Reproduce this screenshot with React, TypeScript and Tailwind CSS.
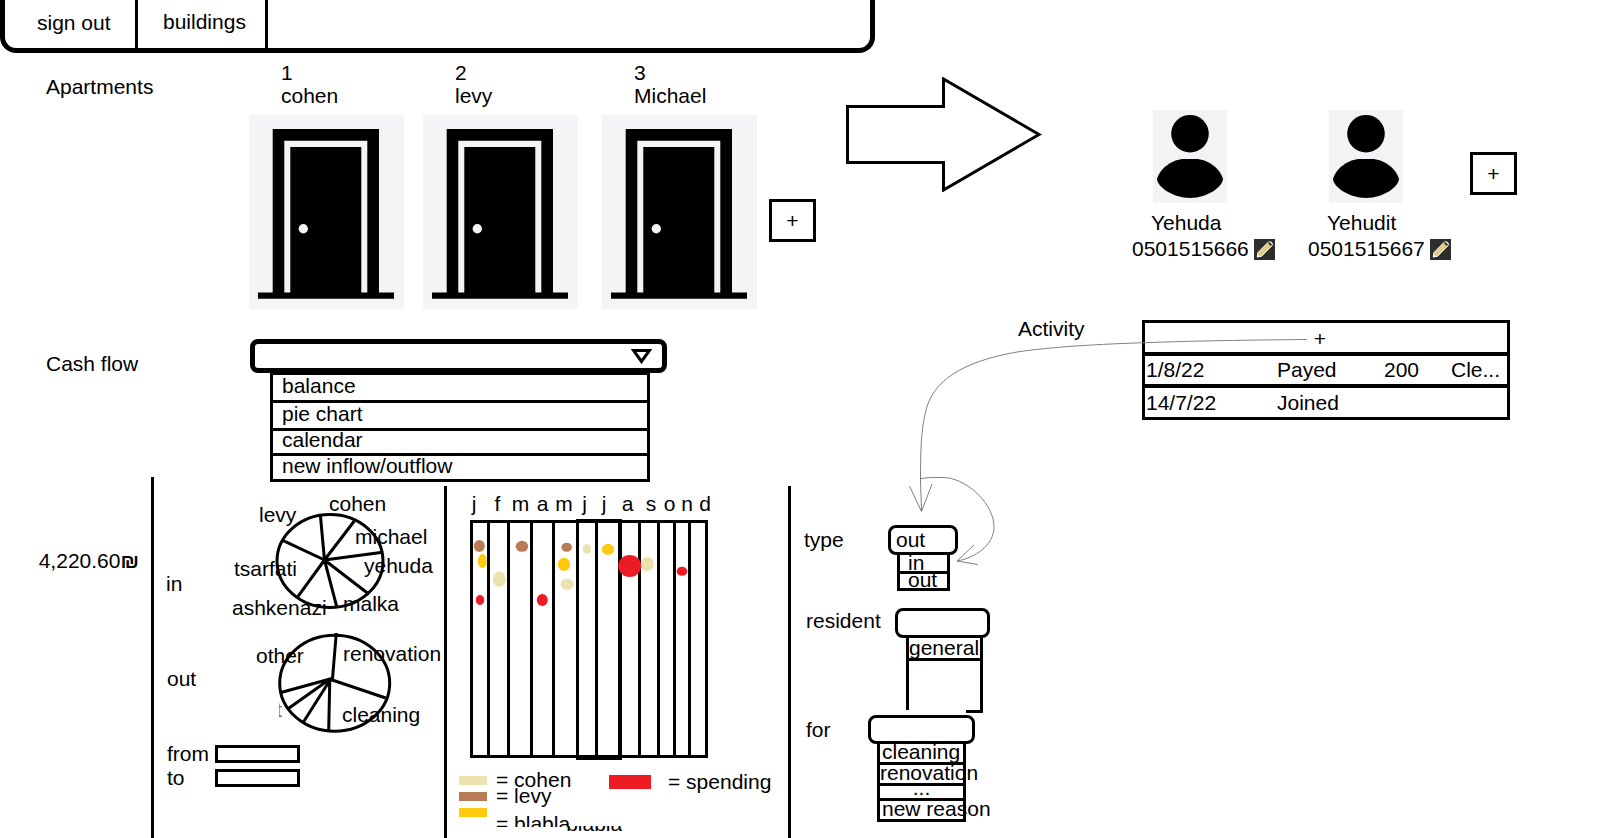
import React from "react";

const doors = [
  { number: "1", name: "cohen" },
  { number: "2", name: "levy" },
  { number: "3", name: "Michael" },
];

const residents = [
  { name: "Yehuda", phone: "0501515666" },
  { name: "Yehudit", phone: "0501515667" },
];

const activity = [
  ["1/8/22", "Payed", "200", "Cle..."],
  ["14/7/22", "Joined", "", ""],
];

const months = ["j", "f", "m", "a", "m", "j", "j", "a", "s", "o", "n", "d"];

const CREAM = "#ece2b0";
const BROWN = "#b97a57";
const GOLD = "#ffc90e";
const RED = "#ed1c24";

const dots = [
  { x: 9.3, y: 27, rx: 5.5, ry: 6, color: BROWN },
  { x: 52, y: 27.3, rx: 6.3, ry: 5.5, color: BROWN },
  { x: 96.7, y: 28.3, rx: 5.3, ry: 4.5, color: BROWN },
  { x: 12.3, y: 42, rx: 4.5, ry: 7, color: GOLD },
  { x: 94, y: 45.3, rx: 6.2, ry: 6.5, color: GOLD },
  { x: 138, y: 30.3, rx: 6.2, ry: 5.5, color: GOLD },
  { x: 29.3, y: 60.3, rx: 6.5, ry: 7.7, color: CREAM },
  { x: 97.3, y: 65.3, rx: 6.7, ry: 5.7, color: CREAM },
  { x: 117, y: 30, rx: 4.2, ry: 5, color: CREAM },
  { x: 177.3, y: 45, rx: 6.7, ry: 7, color: CREAM },
  { x: 10, y: 81, rx: 4.2, ry: 5, color: RED },
  { x: 72.3, y: 81, rx: 5.5, ry: 6, color: RED },
  { x: 159.7, y: 47, rx: 11.5, ry: 11, color: RED },
  { x: 212, y: 52.3, rx: 5.3, ry: 4.5, color: RED },
];

function DoorIcon() {
  return (
    <svg className="h-[194px] w-[155px] bg-[#f4f4f6]" viewBox="0 0 155 194" aria-hidden="true">
      <path d="M23.7 14H130V177.5H145V183.7H9V177.5H23.7Z" fill="#000" />
      <path d="M35.3 177.5V25.7H118.3V177.5H112.3V32H41.3V177.5Z" fill="#f4f4f6" />
      <circle cx="54.3" cy="113.7" r="4.7" fill="#f4f4f6" />
    </svg>
  );
}

function PersonIcon() {
  return (
    <svg className="h-[93px] w-[74px] bg-[#f3f3f5]" viewBox="0 0 74 93" aria-hidden="true">
      <circle cx="37" cy="23.7" r="18.8" />
      <path d="M4 69C7 58 20 49 31 49H43C54 49 67 58 70 69C70 76 55 88 37 88C19 88 4 76 4 69Z" />
    </svg>
  );
}

function PencilIcon() {
  return (
    <svg className="size-[21px] bg-[#2d2d2d]" viewBox="0 0 21 21" aria-hidden="true">
      <path d="M3.2 18L4 13.6L14 3.4Q16.2 2 17.8 3.6Q19.2 5.2 17.6 7L7.6 17.2Z" fill="#e3cd84" stroke="#fff" strokeWidth="1" />
      <path d="M14.6 3.6L17.4 6.4" stroke="#2d2d2d" strokeWidth="2" />
      <path d="M3 18.2L5.4 17.6L3.8 15.8Z" fill="#fff" />
    </svg>
  );
}

function AddButton({ label }: { label: string }) {
  return (
    <button aria-label={label} className="flex h-[43px] w-[47px] items-center justify-center border-3 border-black">
      +
    </button>
  );
}

function IncomePie() {
  return (
    <svg className="h-[130px] w-[214px] overflow-visible" viewBox="0 0 214 130">
      <g fill="none" stroke="#000" strokeWidth="3">
        <ellipse cx="100" cy="75" rx="53" ry="46.5" />
        <path d="M94.5 74L90.3 28.3M94.5 74L124.3 35M94.5 74L152.7 66.3M94.5 74L139 108.3M94.5 74L106.7 120.7M94.5 74L67.3 111.3M94.5 74L52.7 54.3" />
      </g>
      <text x="29" y="36">levy</text>
      <text x="99" y="25">cohen</text>
      <text x="125" y="58">michael</text>
      <text x="134" y="87">yehuda</text>
      <text x="113" y="125">malka</text>
      <text x="2" y="129">ashkenazi</text>
      <text x="4" y="90">tsarfati</text>
    </svg>
  );
}

function SpendingPie() {
  return (
    <svg className="h-[120px] w-[214px] overflow-visible" viewBox="0 0 214 120">
      <clipPath id="cut-label">
        <rect x="49" y="80" width="10" height="30" />
      </clipPath>
      <g fill="none" stroke="#000" strokeWidth="3">
        <ellipse cx="104.7" cy="67.3" rx="55" ry="48" />
        <path d="M102.3 65L106.3 17M100.7 63.5L155.7 82M99.8 63L98.7 114.7M100.7 63L73.3 106.3M100.7 62.5L57.7 93M102 62.5L50 76.7" />
      </g>
      <text x="26" y="47">other</text>
      <text x="113" y="45">renovation</text>
      <text x="112" y="106">cleaning</text>
      <text x="46" y="101" fill="#666" clipPath="url(#cut-label)">t</text>
    </svg>
  );
}

function CalendarChart() {
  return (
    <svg className="mt-[3px] ml-[23px] h-[241px] w-[238px]" viewBox="0 0 238 241" role="img" aria-label="Payments by month">
      <g fill="none" stroke="#000" strokeWidth="3">
        <rect x="1.5" y="2.5" width="235" height="235" />
        <path d="M18.5 2V238M38.5 2V238M61.5 2V238M83.5 2V238M107.5 2V238M126.5 2V238M169.5 2V238M188.5 2V238M204.5 2V238M219.5 2V238" />
      </g>
      <path d="M106 2H152M106 239H152M150 0V241" stroke="#000" strokeWidth="4" />
      {dots.map((d, i) => (
        <ellipse key={i} cx={d.x} cy={d.y} rx={d.rx} ry={d.ry} fill={d.color} />
      ))}
    </svg>
  );
}

function ConnectorLines() {
  return (
    <svg className="pointer-events-none absolute top-0 left-0 h-[600px] w-[1320px]" viewBox="0 0 1320 600" fill="none" stroke="#7f7f7f" aria-hidden="true">
      <path d="M1307 339.5C1250 340 1190 341 1150 342.5C1100 344 1050 347 1017 352C960 362 933 382 926 410C921 430 920.5 450 920.5 480L921.5 511M909.5 486L921.5 511.5L932 484" />
      <path d="M921 478.5C930 477 940 477.5 947 477.7C970 481 994 505 994 527C994 545 975 558 957 561M974 545L957 561L978 564.5" />
    </svg>
  );
}

export default function App() {
  return (
    <div className="relative flex min-h-screen flex-col bg-white font-['Liberation_Sans',Arial,sans-serif] text-[21px] leading-6 text-black">
      <nav className="flex h-[53px] w-[875px] rounded-b-2xl border-5 border-t-0 border-black">
        <a href="#signout" className="w-[133px] border-r-3 border-black pt-[11px] pl-8">sign out</a>
        <a href="#buildings" className="w-[130px] border-r-3 border-black pt-[10px] pl-[25px]">buildings</a>
      </nav>

      <section className="flex h-[264px]">
        <h2 className="w-[249px] pt-[22px] pl-[46px]">Apartments</h2>
        <div className="grid w-[597px] grid-cols-[174px_179px_167px_47px]">
          {doors.map((d) => (
            <figure key={d.number} className="pt-2">
              <figcaption className="h-[54px] pl-8 leading-[23px]">
                <div>{d.number}</div>
                <div>{d.name}</div>
              </figcaption>
              <DoorIcon />
            </figure>
          ))}
          <div className="pt-[146px]">
            <AddButton label="Add apartment" />
          </div>
        </div>
        <svg className="mt-6 h-[115px] w-[286px]" viewBox="0 0 286 115" fill="none" stroke="#000" strokeWidth="3" aria-hidden="true">
          <path d="M1.5 29.5H97.5V2L193 57.5L97.5 113V85.5H1.5Z" />
        </svg>
        <div className="grid grid-cols-[176px_162px_47px]">
          {residents.map((r) => (
            <article key={r.name} className="pt-[57px]">
              <div className="pl-[21px]"><PersonIcon /></div>
              <h3 className="mt-2 pl-[19px]">{r.name}</h3>
              <div className="mt-0.5 flex items-center gap-[5px]">
                <span>{r.phone}</span>
                <button aria-label={"Edit " + r.name}><PencilIcon /></button>
              </div>
            </article>
          ))}
          <div className="pt-[99px]">
            <AddButton label="Add resident" />
          </div>
        </div>
      </section>

      <section className="flex h-[160px]">
        <label htmlFor="view" className="w-[250px] pt-[35px] pl-[46px]">Cash flow</label>
        <div className="relative mt-[22px] h-[34px] w-[417px]">
          <select id="view" className="block h-full w-full appearance-none rounded-lg border-5 border-black bg-white">
            <option value=""></option>
          </select>
          <svg className="pointer-events-none absolute top-[10px] right-[15px] h-[15px] w-[21px]" viewBox="0 0 21 15" fill="none" stroke="#000" strokeWidth="3" aria-hidden="true">
            <path d="M2.5 1.5H18.5L10.5 12.5Z" />
          </svg>
          <ul className="absolute top-[33px] left-5 grid w-[380px] grid-rows-[28px_28px_25px_26px] border-3 border-b-0 border-black">
            {["balance", "pie chart", "calendar", "new inflow/outflow"].map((t) => (
              <li key={t} className="flex border-b-3 border-black">
                <button className="flex w-full items-center pb-1 pl-[9px] leading-5">{t}</button>
              </li>
            ))}
          </ul>
        </div>
        <h2 className="ml-[351px] w-[124px]">Activity</h2>
        <table className="mt-[3px] h-[100px] w-[368px] table-fixed border-separate border-spacing-0 self-start border-3 border-black text-left">
          <colgroup>
            <col className="w-[131px]" />
            <col className="w-[107px]" />
            <col className="w-[67px]" />
            <col />
          </colgroup>
          <tbody>
            <tr className="h-7">
              <td colSpan={4}>
                <button aria-label="Add activity" className="block w-full pt-[3px] pr-3 text-center">+</button>
              </td>
            </tr>
            {activity.map((row) => (
              <tr key={row[0]} className="h-8">
                {row.map((cell, i) => (
                  <td key={i} className="border-t-4 border-black pl-px">{cell}</td>
                ))}
              </tr>
            ))}
          </tbody>
        </table>
      </section>

      <main className="flex flex-1">
        <div className="w-[154px] border-r-3 border-black pt-[72px] pr-3 text-right">
          4,220.60<span className="font-bold">₪</span>
        </div>

        <section className="mt-[9px] w-[293px] border-r-3 border-black">
          <div className="flex">
            <h3 className="w-[76px] pt-[86px] pl-3">in</h3>
            <IncomePie />
          </div>
          <div className="flex">
            <h3 className="w-[76px] pt-[51px] pl-[13px]">out</h3>
            <SpendingPie />
          </div>
          <form className="pt-[6px] pl-[13px]">
            <div className="flex items-center">
              <label htmlFor="from" className="w-12">from</label>
              <input id="from" className="h-[18px] w-[85px] border-3 border-black text-xs" />
            </div>
            <div className="flex items-center">
              <label htmlFor="to" className="w-12">to</label>
              <input id="to" className="h-[18px] w-[85px] border-3 border-black text-xs" />
            </div>
          </form>
        </section>

        <section className="mt-[9px] w-[344px] border-r-3 border-black pt-[6px]">
          <div className="ml-[15px] grid grid-cols-[24px_23px_23px_21px_22px_19px_20px_27px_20px_17px_18px_18px] text-center">
            {months.map((m, i) => (
              <span key={i}>{m}</span>
            ))}
          </div>
          <CalendarChart />
          <div className="mt-3 flex pl-3">
            <ul className="w-[150px] leading-4 whitespace-nowrap">
              <li className="flex h-4 items-center gap-[9px]">
                <span className="h-[9px] w-7 shrink-0 bg-[#ece2b0]" />= cohen
              </li>
              <li className="flex h-4 items-center gap-[9px]">
                <span className="h-[9px] w-7 shrink-0 bg-[#b97a57]" />= levy
              </li>
              <li className="flex h-4 items-start gap-[9px]">
                <span className="mt-1 h-[9px] w-7 shrink-0 bg-[#ffc90e]" />
                <span className="mt-2 flex items-start leading-6">
                  <span className="h-[15px] shrink-0 overflow-hidden">= blabla</span>
                  <span className="mt-[14px] -ml-1 flex h-[10px] shrink-0 flex-col justify-end overflow-hidden">
                    <span>blabla</span>
                  </span>
                </span>
              </li>
            </ul>
            <div className="flex h-5 items-center gap-[17px] whitespace-nowrap">
              <span className="h-[14px] w-[42px] bg-[#ed1c24]" />= spending
            </div>
          </div>
        </section>

        <form className="mt-[9px] flex-1 pt-[39px]">
          <div className="flex h-[83px] items-start">
            <label htmlFor="type" className="w-[97px] pl-[13px] leading-[30px]">type</label>
            <div>
              <select id="type" className="block h-[30px] w-[70px] appearance-none rounded-lg border-3 border-black bg-white pl-[5px]">
                <option>out</option>
              </select>
              <ul className="ml-[9px] w-[53px] border-x-3 border-black">
                <li className="h-[19px] border-b-3 border-black pl-2 leading-4"><button type="button" className="block">in</button></li>
                <li className="h-[17px] border-b-3 border-black pl-2 leading-3"><button type="button" className="block">out</button></li>
              </ul>
            </div>
          </div>
          <div className="flex h-[107px] items-start">
            <label htmlFor="resident" className="w-[104px] pl-[15px] leading-[26px]">resident</label>
            <div>
              <select id="resident" className="block h-[30px] w-[95px] appearance-none rounded-lg border-3 border-black bg-white">
                <option value=""></option>
              </select>
              <div className="ml-[11px] w-[77px]">
                <div className="h-[72px] border-x-3 border-black">
                  <button type="button" className="block h-[23px] w-full border-b-3 border-black text-left leading-5">general</button>
                </div>
                <div className="ml-auto h-[3px] w-[17px] bg-black" />
              </div>
            </div>
          </div>
          <div className="flex items-start">
            <label htmlFor="reason" className="w-[77px] pl-[15px] leading-[30px]">for</label>
            <div>
              <select id="reason" className="block h-[29px] w-[107px] appearance-none rounded-lg border-3 border-black bg-white">
                <option value=""></option>
              </select>
              <ul className="ml-[9px] w-[89px] border-x-3 border-black leading-4 whitespace-nowrap">
                <li className="h-[21px] border-b-3 border-black pl-[2px]"><button type="button" className="block">cleaning</button></li>
                <li className="h-[21px] border-b-3 border-black"><button type="button" className="block">renovation</button></li>
                <li className="h-[15px] border-b-3 border-black text-center leading-1"><button type="button" className="block w-full">...</button></li>
                <li className="h-[21px] border-b-3 border-black pl-[2px]"><button type="button" className="block">new reason</button></li>
              </ul>
            </div>
          </div>
        </form>
      </main>

      <ConnectorLines />
    </div>
  );
}
